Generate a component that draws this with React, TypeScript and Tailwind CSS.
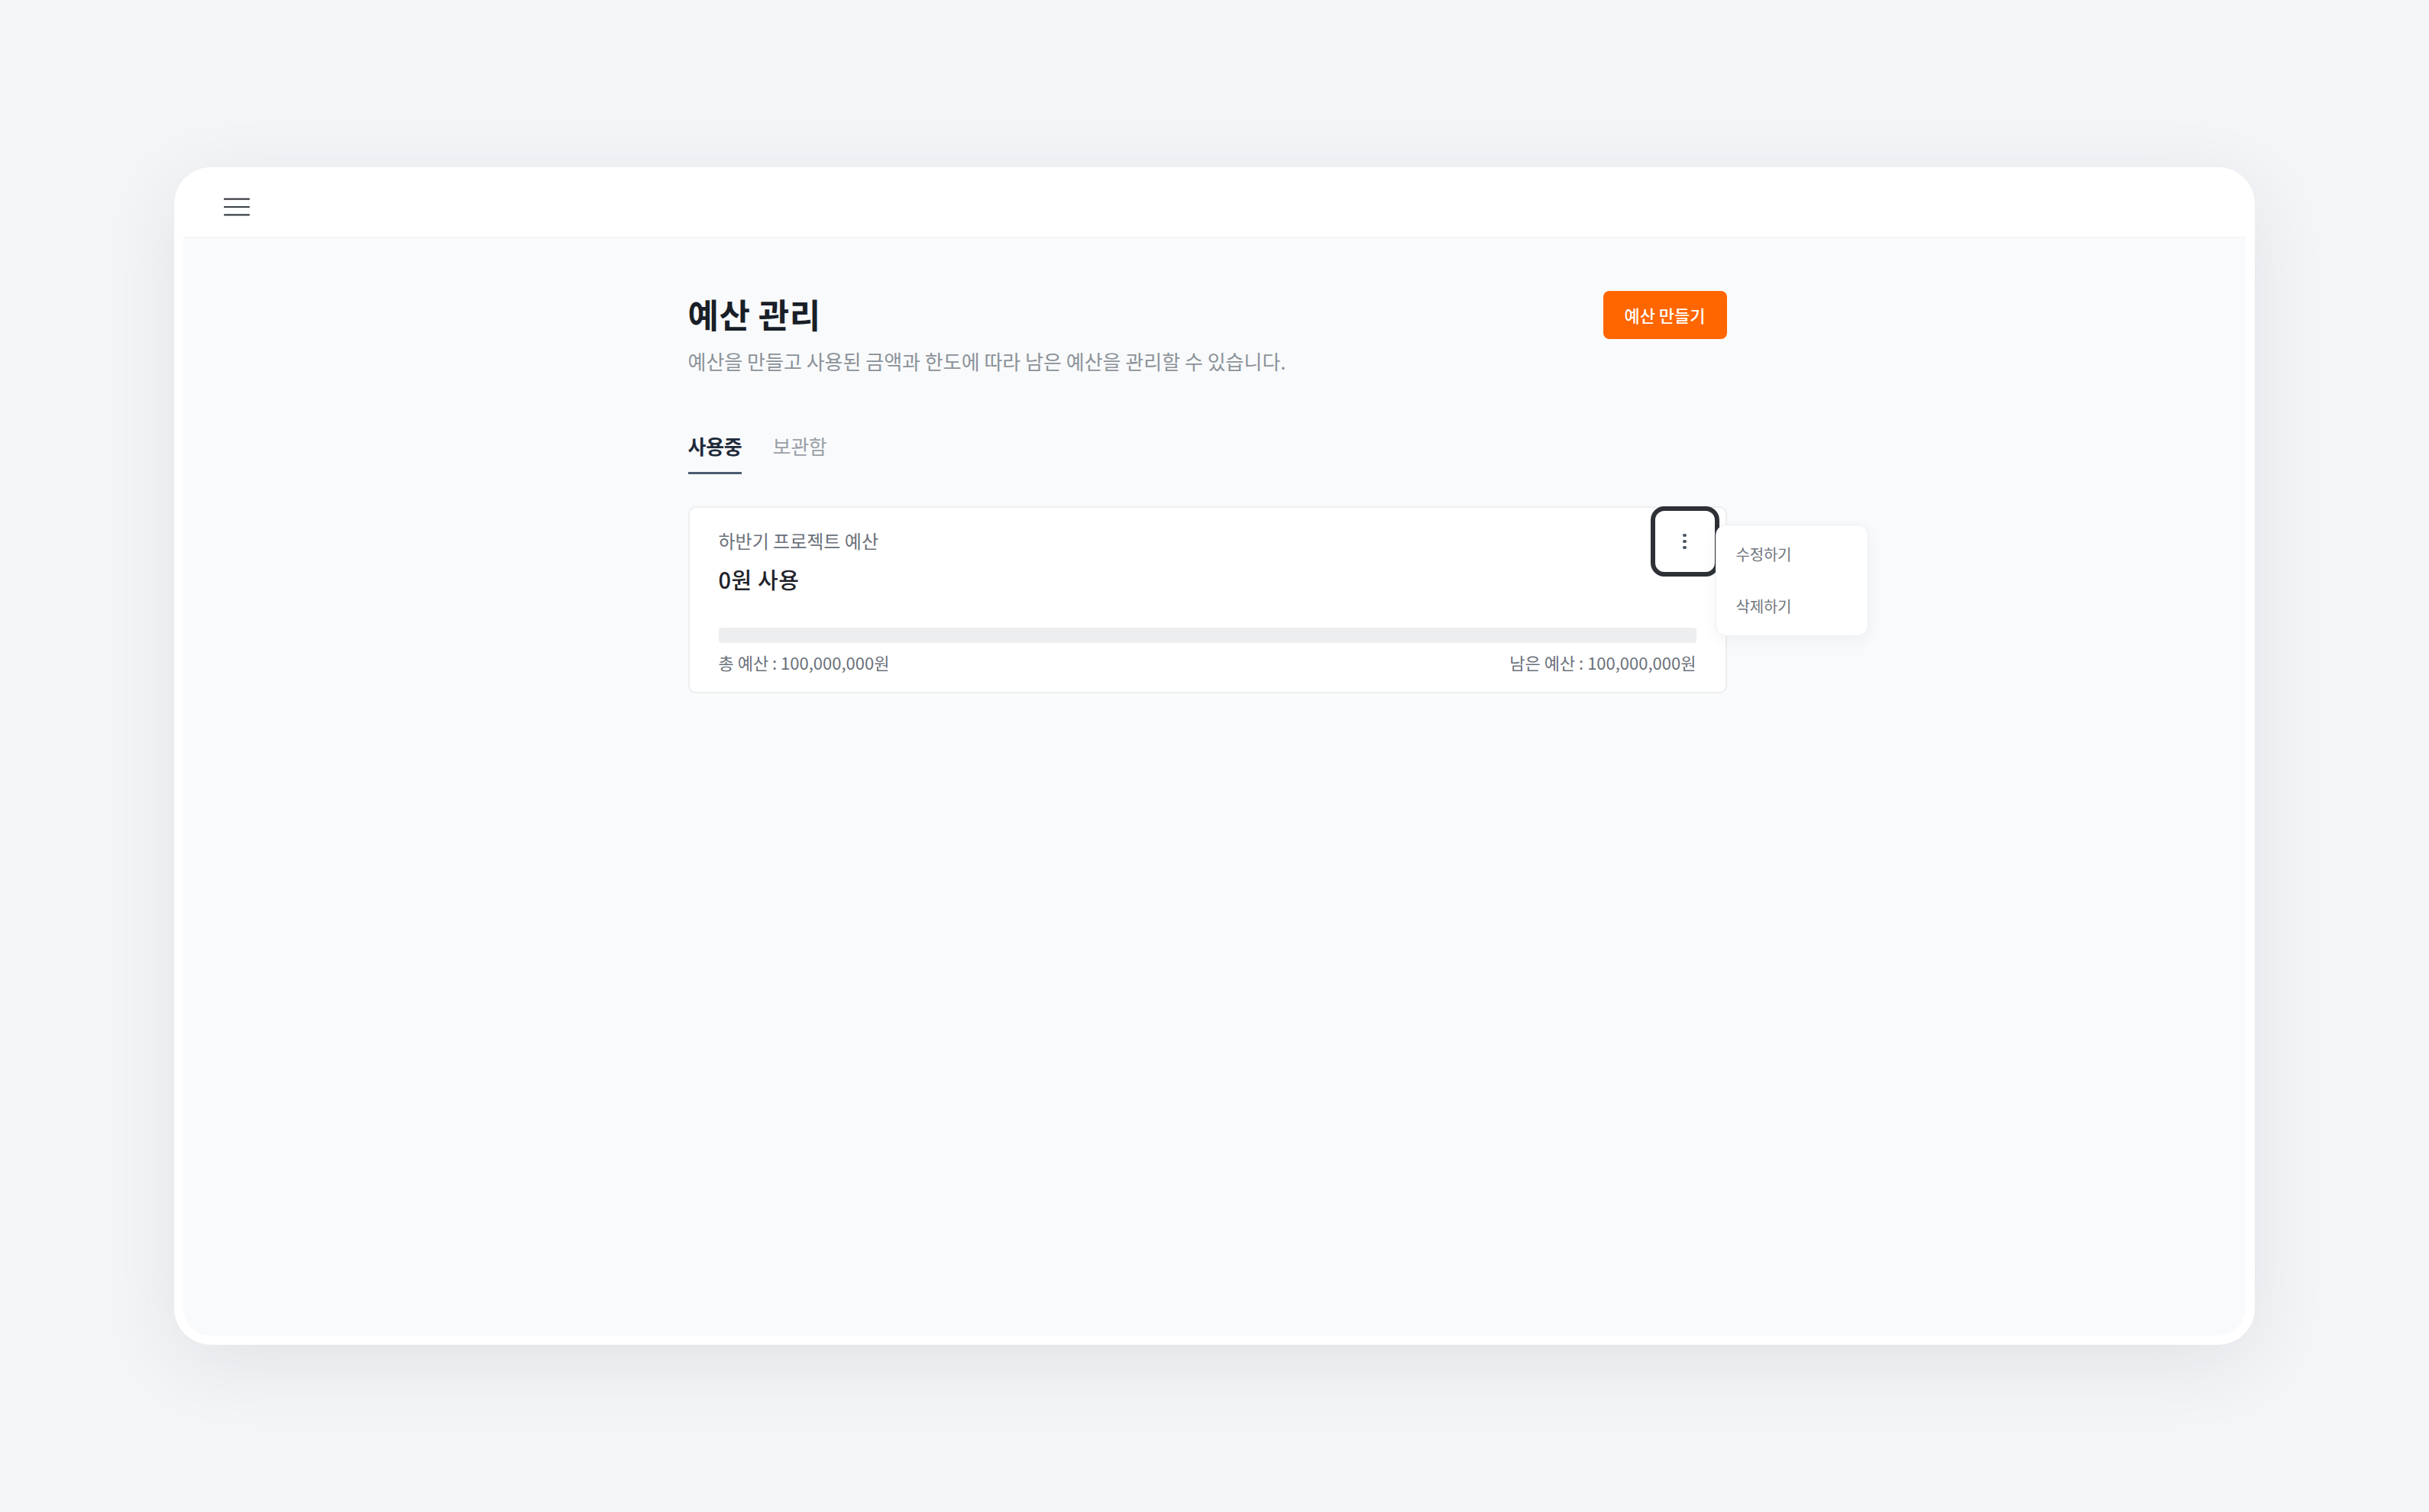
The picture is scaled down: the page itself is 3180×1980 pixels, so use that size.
import React from "react";

/* ── Icons ───────────────────────────────────────────── */

function MenuIcon() {
  return (
    <svg width="34" height="24" viewBox="0 0 34 24" fill="none">
      <path
        d="M1 1.7H33M1 12H33M1 22.3H33"
        stroke="#3a3f45"
        strokeWidth="2.2"
        strokeLinecap="round"
      />
    </svg>
  );
}

/* ── Budget card ─────────────────────────────────────── */

function BudgetCard() {
  return (
    <div className="relative mt-[42px] rounded-[10px] border-2 border-[#eceef0] bg-white px-[38px] pt-[26px] pb-[24px]">
      <p className="text-[24px] leading-[34px] text-[#6b717a]">하반기 프로젝트 예산</p>
      <p className="mt-[13px] text-[29px] leading-[40px] font-medium tracking-[0.02em] text-[#1f2329]">
        0원 사용
      </p>

      <div className="mt-[44px] h-[20px] w-full rounded-[4px] bg-[#edeef0]" />

      <div className="mt-[10px] flex items-center justify-between text-[22px] leading-[30px] text-[#6b717a]">
        <span>총 예산 : 100,000,000원</span>
        <span>남은 예산 : 100,000,000원</span>
      </div>

      {/* kebab button (focused) */}
      <button className="absolute top-[-2px] right-[8px] flex h-[92px] w-[90px] flex-col items-center justify-center gap-[3.5px] rounded-[18px] border-[6px] border-[#2d3136] bg-white">
        <span className="h-[4.5px] w-[4.5px] rounded-full bg-[#4b5563]" />
        <span className="h-[4.5px] w-[4.5px] rounded-full bg-[#4b5563]" />
        <span className="h-[4.5px] w-[4.5px] rounded-full bg-[#4b5563]" />
      </button>

      {/* dropdown menu */}
      <div className="absolute top-[22px] right-[-187px] w-[200px] rounded-[14px] border border-[#eceef1] bg-white py-[4px] shadow-[0_6px_20px_rgba(20,30,50,0.05)]">
        <div className="flex h-[68px] items-center pl-[26px] text-[20px] tracking-[-0.01em] text-[#6f757d]">
          수정하기
        </div>
        <div className="flex h-[68px] items-center pl-[26px] text-[20px] tracking-[-0.01em] text-[#6f757d]">
          삭제하기
        </div>
      </div>
    </div>
  );
}

/* ── Main Page ───────────────────────────────────────── */

export default function App() {
  return (
    <div className="min-h-screen w-full bg-[#f4f5f7] px-[228px] py-[219px] font-['Noto_Sans_CJK_KR','Noto_Sans',sans-serif]">
      <div className="flex h-[1542px] flex-col rounded-[48px] bg-white p-[12px] shadow-[0_24px_100px_rgba(30,40,60,0.09)]">
        {/* Header */}
        <header className="flex h-[80px] shrink-0 items-center border-b border-[#eef0f2] pl-[53px]">
          <MenuIcon />
        </header>

        {/* Content */}
        <main className="flex flex-1 justify-center rounded-b-[36px] bg-[#f9fafb] pt-[70px] pr-[19px]">
          <div className="w-[1360px]">
            <div className="flex items-start justify-between">
              <div>
                <h1 className="text-[44px] leading-[60px] font-bold tracking-[0.01em] text-[#191f28]">
                  예산 관리
                </h1>
                <p className="mt-[14px] text-[26px] leading-[36px] text-[#8b929a]">
                  예산을 만들고 사용된 금액과 한도에 따라 남은 예산을 관리할 수 있습니다.
                </p>
              </div>
              <button className="flex h-[63px] w-[162px] items-center justify-center rounded-[8px] bg-[#ff6600] text-[22px] font-medium text-white">
                예산 만들기
              </button>
            </div>

            {/* Tabs */}
            <div className="mt-[75px] flex gap-[40px]">
              <button className="border-b-[3px] border-[#4b5b70] pb-[16px] text-[26px] leading-[36px] font-bold tracking-[-0.01em] text-[#1e2a3b]">
                사용중
              </button>
              <button className="border-b-[3px] border-transparent pb-[16px] text-[26px] leading-[36px] tracking-[-0.01em] text-[#9aa0a8]">
                보관함
              </button>
            </div>

            <BudgetCard />
          </div>
        </main>
      </div>
    </div>
  );
}
